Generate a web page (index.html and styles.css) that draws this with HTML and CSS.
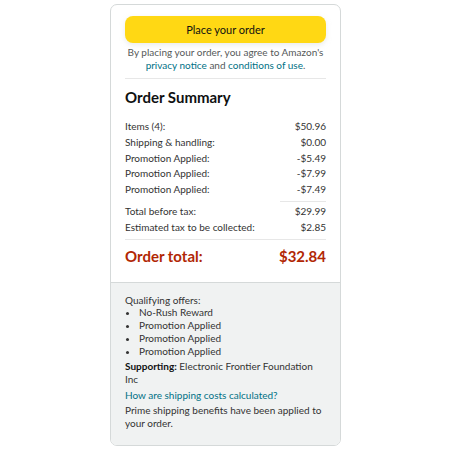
FILE: index.html
```html
<!DOCTYPE html>
<html>
<head>
<meta charset="utf-8">
<link rel="stylesheet" href="styles.css">
</head>
<body>
<div class="card">
  <div class="top">
    <button class="place">Place your order</button>
    <p class="agree">By placing your order, you agree to Amazon's <a>privacy notice</a> and <a>conditions of use</a>.</p>
    <hr class="div">
    <h2 class="title">Order Summary</h2>
    <div class="rows">
      <div class="row"><span>Items (4):</span><span>$50.96</span></div>
      <div class="row"><span>Shipping &amp; handling:</span><span>$0.00</span></div>
      <div class="row"><span>Promotion Applied:</span><span>-$5.49</span></div>
      <div class="row"><span>Promotion Applied:</span><span>-$7.99</span></div>
      <div class="row"><span>Promotion Applied:</span><span>-$7.49</span></div>
      <div class="short"></div>
      <div class="row"><span>Total before tax:</span><span>$29.99</span></div>
      <div class="row"><span>Estimated tax to be collected:</span><span>$2.85</span></div>
    </div>
    <hr class="div div-total">
    <div class="total"><span>Order total:</span><span>$32.84</span></div>
  </div>
  <div class="bottom">
    <div>Qualifying offers:</div>
    <ul class="offers">
      <li>No-Rush Reward</li>
      <li>Promotion Applied</li>
      <li>Promotion Applied</li>
      <li>Promotion Applied</li>
    </ul>
    <p class="support"><b>Supporting:</b> Electronic Frontier Foundation Inc</p>
    <a class="link">How are shipping costs calculated?</a>
    <p class="prime">Prime shipping benefits have been applied to your order.</p>
  </div>
</div>
</body>
</html>
```

FILE: styles.css
```css
* { box-sizing: border-box; }
body {
  margin: 0;
  background: #fff;
  font-family: Lato, "Noto Sans", Arial, sans-serif;
  color: #0f1111;
  font-size: 10.5px;
}
.card {
  width: 231px;
  margin: 4px 0 0 110px;
  border: 1px solid #d5d9d9;
  border-radius: 7px;
  overflow: hidden;
}
.top { padding: 11px 14px 16px 14px; }
.place {
  display: block;
  width: 100%;
  height: 27px;
  border: none;
  border-radius: 8px;
  background: #ffd814;
  box-shadow: 0 2px 5px rgba(213,217,217,.5);
  font: inherit;
  font-size: 11px;
  color: #0f1111;
}
.agree {
  margin: 3px 0 0;
  text-align: center;
  font-size: 10px;
  line-height: 13px;
  color: #565959;
}
a { color: #007185; }
.div {
  border: none;
  border-top: 1px solid #e7e7e7;
  margin: 6px 0 0;
}
.div-total { margin-top: 3px; }
.title {
  margin: 8px 0 0;
  font-size: 15px;
  font-weight: 700;
  line-height: 20px;
}
.rows {
  margin-top: 12px;
  font-size: 10px;
  color: #333;
}
.row {
  display: flex;
  justify-content: space-between;
  line-height: 15.8px;
}
.short {
  width: 46px;
  margin: 3px 0 2px auto;
  border-top: 1px solid #e7e7e7;
}
.total {
  display: flex;
  justify-content: space-between;
  margin-top: 6px;
  font-size: 15px;
  font-weight: 700;
  line-height: 20px;
  color: #b12704;
}
.bottom {
  background: #f0f2f2;
  border-top: 1px solid #d5d9d9;
  padding: 11px 14px 15px;
  font-size: 10px;
  line-height: 12.8px;
  color: #333;
}
.offers {
  margin: 0;
  padding-left: 14px;
}
.support { margin: 2px 0 3px; line-height: 13px; }
.support b { color: #0f1111; }
.link { display: block; margin-bottom: 3px; }
.prime { margin: 0; }
```
